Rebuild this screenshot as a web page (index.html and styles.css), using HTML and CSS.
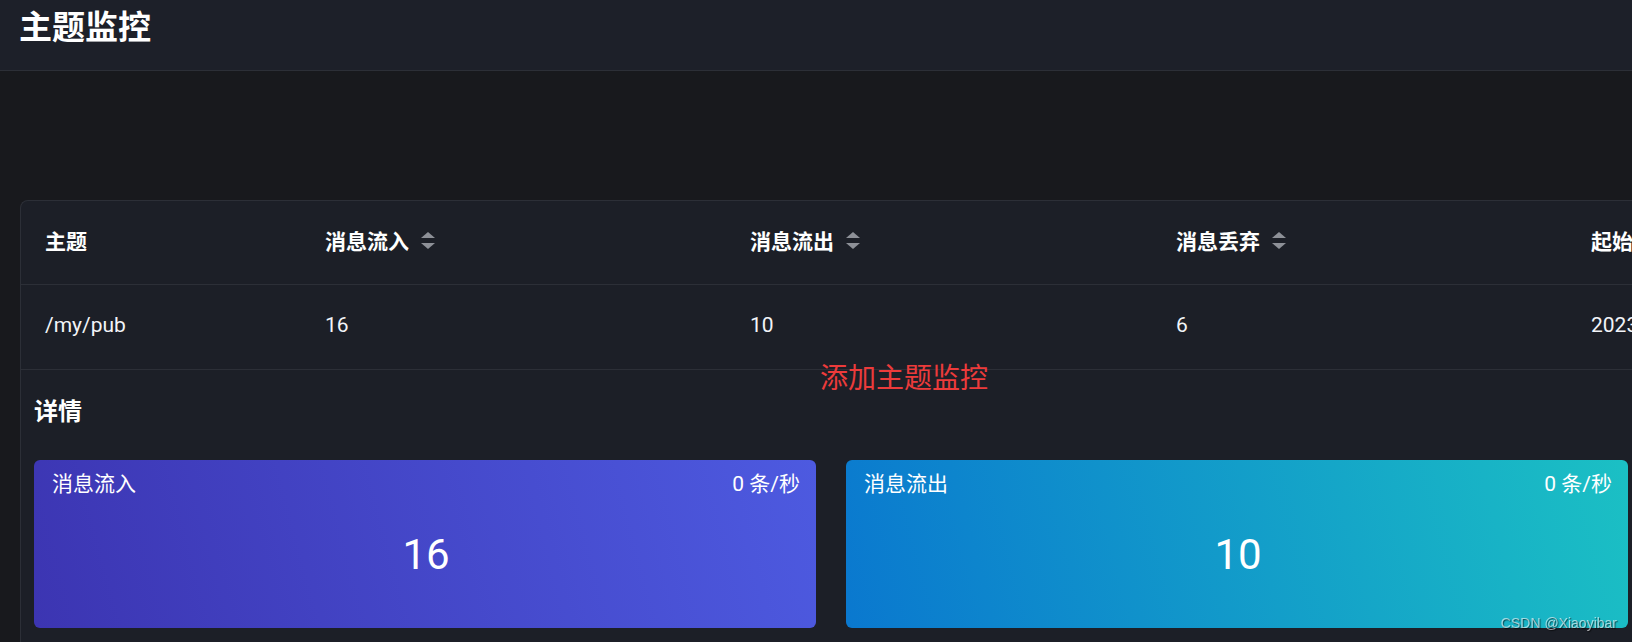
FILE: index.html
```html
<!DOCTYPE html>
<html lang="zh-CN">
<head>
  <meta charset="UTF-8" />
  <meta name="viewport" content="width=device-width, initial-scale=1.0"/>
  <title>主题监控</title>
  <link rel="stylesheet" href="styles.css">
</head>
<body>
  <header class="page-header">
    <h1>主题监控</h1>
  </header>

  <main class="page-main">
    <div class="topic-panel">
      <table class="topic-table">
        <colgroup>
          <col style="width:280px">
          <col style="width:425px">
          <col style="width:426px">
          <col style="width:415px">
          <col style="width:300px">
        </colgroup>
        <thead>
          <tr>
            <th>主题</th>
            <th><span class="sortable">消息流入 <i class="caret"></i></span></th>
            <th><span class="sortable">消息流出 <i class="caret"></i></span></th>
            <th><span class="sortable">消息丢弃 <i class="caret"></i></span></th>
            <th>起始时间</th>
          </tr>
        </thead>
        <tbody>
          <tr>
            <td>/my/pub</td>
            <td>16</td>
            <td>10</td>
            <td>6</td>
            <td>2023-05-12 10:24:36</td>
          </tr>
        </tbody>
      </table>

      <p class="add-topic">添加主题监控</p>

      <section class="details">
        <h2>详情</h2>
        <div class="stat-grid">
          <div class="stat-card stat-in">
            <div class="stat-head">
              <span>消息流入</span>
              <span>0 条/秒</span>
            </div>
            <div class="stat-value">16</div>
          </div>
          <div class="stat-card stat-out">
            <div class="stat-head">
              <span>消息流出</span>
              <span>0 条/秒</span>
            </div>
            <div class="stat-value">10</div>
          </div>
        </div>
      </section>
    </div>
  </main>

  <div class="watermark">CSDN @Xiaoyibar</div>
</body>
</html>
```

FILE: styles.css
```css
html, body {
  overflow: hidden;
}

body {
  margin: 0;
  height: 642px;
  font-family: Roboto, "Noto Sans CJK SC", sans-serif;
  background: #18191d;
  color: #fff;
}

.page-header {
  height: 70px;
  padding: 0 19px;
  background: #1d2029;
  border-bottom: 1px solid #2c2f37;
}

.page-header h1 {
  margin: 0;
  font-size: 33px;
  line-height: 56px;
  font-weight: 700;
}

.page-main {
  padding: 129px 20px 0;
}

.topic-panel {
  position: relative;
  width: 1620px;
  background: #1c1f27;
  border: 1px solid #2c2f37;
  border-right: none;
  border-radius: 8px 0 0 0;
}

.topic-table {
  border-collapse: collapse;
  table-layout: fixed;
  width: 1846px;
}

.topic-table th,
.topic-table td {
  padding: 0 24px;
  text-align: left;
  white-space: nowrap;
  border-bottom: 1px solid #2c2f37;
  font-size: 21px;
}

.topic-table th {
  height: 78px;
  padding-bottom: 5px;
  font-weight: 700;
}

.topic-table td {
  height: 80px;
  padding-bottom: 4px;
  color: #f2f4f8;
}

.sortable {
  display: inline-flex;
  align-items: center;
  gap: 12px;
}

.caret {
  position: relative;
  display: inline-block;
  width: 14px;
  height: 17px;
}

.caret::before,
.caret::after {
  content: "";
  position: absolute;
  left: 0;
  border-left: 7px solid transparent;
  border-right: 7px solid transparent;
}

.caret::before {
  top: 0;
  border-bottom: 6px solid #8d9097;
}

.caret::after {
  bottom: 0;
  border-top: 6px solid #8d9097;
}

/* overlay text sitting across the row border */
.add-topic {
  position: absolute;
  left: 799px;
  top: 163px;
  margin: 0;
  font-size: 28px;
  line-height: 30px;
  color: #ec3b3b;
}

.details {
  padding: 26px 13px 30px;
}

.details h2 {
  margin: 0 0 32px;
  font-size: 24px;
  line-height: 32px;
  font-weight: 700;
}

.stat-grid {
  display: grid;
  grid-template-columns: 782px 782px;
  gap: 30px;
}

.stat-card {
  height: 168px;
  box-sizing: border-box;
  padding: 10px 16px 0 18px;
  border-radius: 6px;
}

.stat-in {
  background: linear-gradient(75deg, #3c35b2, #4d5ae0);
}

.stat-out {
  background: linear-gradient(75deg, #0a78cf, #1bc0c4);
}

.stat-head {
  display: flex;
  justify-content: space-between;
  font-size: 21px;
  line-height: 28px;
}

.stat-value {
  margin-top: 32px;
  text-align: center;
  font-size: 42px;
  line-height: 50px;
}

.watermark {
  position: fixed;
  right: 15px;
  bottom: 11px;
  font-family: "Liberation Sans", sans-serif;
  font-size: 14px;
  line-height: 16px;
  color: rgba(255, 255, 255, 0.6);
  text-shadow: 1px 1px 1px rgba(0, 0, 0, 0.6);
}
```
